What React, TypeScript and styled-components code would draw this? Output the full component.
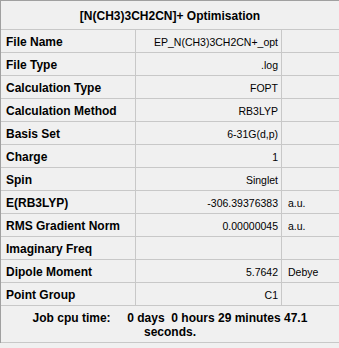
import React from 'react'
import styled, { createGlobalStyle } from 'styled-components'

const GlobalStyle = createGlobalStyle`
    html, body {
        margin: 0;
        padding: 0;
        background: #f0f0f0;
    }
    body {
        font-family: 'Liberation Sans', Arial, sans-serif;
        font-size: 10.5px;
        color: #000000;
    }
`

const Panel = styled.div`
    width: 339px;
    height: 348px;
    overflow: hidden;
    background: #f0f0f0;
`

const Table = styled.div`
    display: grid;
    grid-template-columns: 135px 146px 57px;
    border-left: 1px solid #a0a0a0;
    border-top: 1px solid #a0a0a0;
`

const Cell = styled.div<{ $align?: 'left' | 'right' | 'center'; $span?: number; $height?: number; $last?: boolean }>`
    grid-column: span ${p => p.$span ?? 1};
    height: ${p => p.$height ?? 22}px;
    display: flex;
    align-items: center;
    justify-content: ${p => (p.$align === 'right' ? 'flex-end' : p.$align === 'center' ? 'center' : 'flex-start')};
    border-right: ${p => (p.$last ? 'none' : '1px solid #c8c8c8')};
    border-bottom: 1px solid #c8c8c8;
    padding: 1px ${p => (p.$align === 'right' ? 3 : 0)}px 0 ${p => (p.$align === 'left' ? 5 : 0)}px;
    box-sizing: border-box;
    white-space: nowrap;
`

const Title = styled(Cell)`
    font-weight: 700;
    font-size: 12px;
`

const Label = styled(Cell)`
    font-weight: 700;
    font-size: 12px;
`

const Unit = styled(Cell)`
    padding-left: 6px;
`

const Footer = styled.div`
    grid-column: span 3;
    height: 37px;
    box-sizing: border-box;
    padding: 5px 20px 0 20px;
    border-bottom: 1px solid #c8c8c8;
    text-align: center;
    line-height: 14px;
    font-size: 12px;
    font-weight: 700;
    white-space: pre-wrap;
`

const rows: [string, string, string][] = [
    ['File Name', 'EP_N(CH3)3CH2CN+_opt', ''],
    ['File Type', '.log', ''],
    ['Calculation Type', 'FOPT', ''],
    ['Calculation Method', 'RB3LYP', ''],
    ['Basis Set', '6-31G(d,p)', ''],
    ['Charge', '1', ''],
    ['Spin', 'Singlet', ''],
    ['E(RB3LYP)', '-306.39376383', 'a.u.'],
    ['RMS Gradient Norm', '0.00000045', 'a.u.'],
    ['Imaginary Freq', '', ''],
    ['Dipole Moment', '5.7642', 'Debye'],
    ['Point Group', 'C1', ''],
]

const App = () => {
    return (
        <Panel>
            <GlobalStyle />
            <Table>
                <Title $span={3} $align="center" $height={29} $last>
                    [N(CH3)3CH2CN]+ Optimisation
                </Title>
                {rows.map(([label, value, unit]) => (
                    <React.Fragment key={label}>
                        <Label $align="left" $height={23}>{label}</Label>
                        <Cell $align="right" $height={23}>{value}</Cell>
                        <Unit $height={23} $last>{unit}</Unit>
                    </React.Fragment>
                ))}
                <Footer>{'Job cpu time:     0 days  0 hours 29 minutes 47.1 seconds.'}</Footer>
            </Table>
        </Panel>
    )
}

export default App
